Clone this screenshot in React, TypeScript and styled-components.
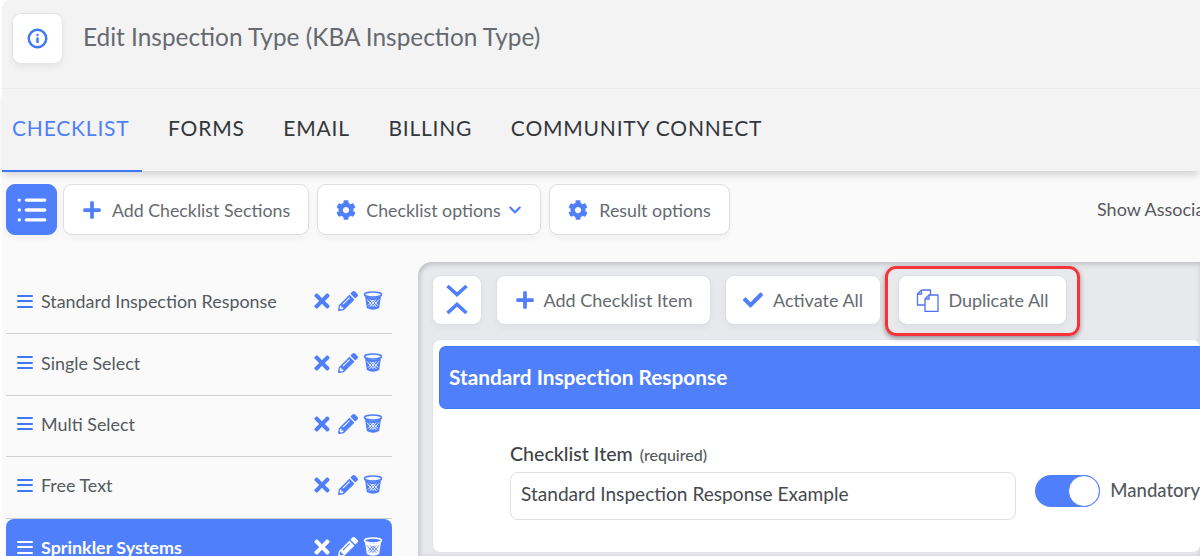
import React from "react";
import styled, { createGlobalStyle } from "styled-components";
import { Info, List } from "lucide-react";
import { FaCheck, FaChevronDown, FaCog, FaPencilAlt, FaPlus, FaTimes } from "react-icons/fa";

const BLUE = "#4f7ffb";
const Global = createGlobalStyle`
  html, body { margin: 0; padding: 0; width: 1200px; height: 556px; overflow: hidden; background: #fff; }
  * { box-sizing: border-box; }
  body { font-family: Lato, "Liberation Sans", sans-serif; color: #555; }
`;
const Frame = styled.div`
  width: 1200px; height: 556px; overflow: hidden; padding-left: 2px; background: #fff;
  display: flex; flex-direction: column;
`;
const Header = styled.header`
  height: 88px; flex: none; background: #f3f3f4; display: flex; align-items: flex-start;
  padding: 13px 0 0 10px; gap: 20px; border-top-left-radius: 8px;
`;
const InfoBox = styled.div`
  width: 51px; height: 51px; border-radius: 9px; background: #fff; border: 1px solid #e4e4e6;
  box-shadow: 0 3px 6px rgba(0,0,0,.06); display: flex; align-items: center; justify-content: center; color: #3f78f5;
`;
const Title = styled.h1`
  margin: 0; font-size: 24.4px; line-height: 48px; font-weight: 400; color: #666a70; white-space: nowrap;
`;
const Tabs = styled.nav`
  height: 83px; flex: none; background: #f3f3f4; border-top: 1px solid #ebebec; display: flex; gap: 38.6px;
  box-shadow: 0 6px 8px -2px rgba(0,0,0,.16); position: relative; z-index: 1;
`;
const Tab = styled.a<{ $active?: boolean }>`
  height: 82px; line-height: 78px; font-size: 21px; letter-spacing: .8px; white-space: nowrap;
  color: ${p => (p.$active ? BLUE : "#33373c")};
  margin-left: ${p => (p.$active ? "10px" : "0")};
  position: relative;
  ${p => p.$active && `&::after { content: ""; position: absolute; left: -10px; right: -13px; bottom: -1px; height: 2px; background: #3f78f5; }`}
`;
const Body = styled.div`
  flex: 1; background: #fafafa; min-height: 0; display: flex; flex-direction: column;
`;
const TopBar = styled.div`
  display: flex; gap: 8px; padding: 13px 0 0 4px; height: 91px; flex: none;
`;
const Btn = styled.button<{ $w: number; $gap?: number; $h?: number; $ml?: number; $fs?: number }>`
  width: ${p => p.$w}px; height: ${p => p.$h ?? 51}px; margin-left: ${p => p.$ml ?? 0}px;
  flex: none; background: #fff; border: 1px solid #dedfe1; border-radius: 9px;
  box-shadow: 0 3px 6px rgba(0,0,0,.04);
  font: 400 ${p => p.$fs ?? 17.8}px Lato, sans-serif; color: #666a70; display: flex; align-items: center; justify-content: center;
  gap: ${p => p.$gap ?? 9}px; padding: 0; white-space: nowrap;
  svg { color: ${BLUE}; flex: none; }
`;
const MenuBtn = styled(Btn)`
  background: ${BLUE}; border-color: ${BLUE}; svg { color: #fff; }
`;
const Caret = styled(FaChevronDown)`
  margin-left: -3px;
`;
const Show = styled.span`
  margin-left: auto; font-size: 18px; line-height: 51px; color: #55585d; white-space: nowrap; width: 103px;
`;
const Main = styled.div`
  flex: 1; min-height: 0; display: flex; padding-left: 4px;
`;
const Sidebar = styled.aside`
  width: 386px; flex: none; padding-top: 11px; margin-right: 26px;
`;
const Row = styled.div<{ $sel?: boolean }>`
  height: 61.4px; display: flex; align-items: center; padding: 0 9px 4px 11px; gap: 8px;
  border-bottom: ${p => (p.$sel ? "0" : "1px solid #cfcfcf")};
  background: ${p => (p.$sel ? BLUE : "transparent")};
  border-radius: ${p => (p.$sel ? "8px 8px 0 0" : "0")};
  color: ${p => (p.$sel ? "#fff" : "#555a60")};
  font-weight: ${p => (p.$sel ? 700 : 400)};
  svg { color: ${p => (p.$sel ? "#fff" : BLUE)}; flex: none; }
`;
const RowName = styled.span`
  flex: 1; white-space: nowrap; font-size: 17.9px;
`;
const RowIcons = styled.span`
  display: flex; align-items: center; gap: 5px;
`;
const Handle = styled.span<{ $sel?: boolean }>`
  width: 16px; height: 13px; flex: none; display: flex; flex-direction: column; justify-content: space-between;
  color: ${p => (p.$sel ? "#fff" : "#3f78f5")};
  i { display: block; height: 2px; background: currentColor; border-radius: 1px; }
`;
const Panel = styled.section`
  width: 782px; flex: none; background: #e8e9ec; border-radius: 14px 0 0 0; padding: 13px 0 0 14px;
  box-shadow: inset 0 3px 5px rgba(0,0,0,.12), inset 3px 0 5px rgba(0,0,0,.08);
  display: flex; flex-direction: column; height: 294px;
`;
const PanelBar = styled.div`
  display: flex; gap: 14px; height: 50px; flex: none; position: relative;
`;
const Mark = styled.span`
  position: absolute; left: 453px; top: -9px; width: 195px; height: 70px; border: 3px solid #f5333b; border-radius: 11px;
  box-shadow: 0 2px 5px rgba(0,0,0,.4);
`;
const Card = styled.div`
  margin-top: 14px; background: #fff; border: 1px solid #e2e3e5; border-right: 0; border-radius: 8px;
  padding: 6px 0 0 6px; height: 214px; overflow: hidden;
`;
const Banner = styled.div`
  height: 63px; background: ${BLUE}; border: 1px solid #3f78f5; border-right: 0; border-radius: 7px 0 0 7px;
  color: #fff; font-weight: 700; font-size: 20.8px; line-height: 59px; padding-left: 9px;
`;
const Form = styled.div`
  padding: 33px 0 0 71px;
`;
const Label = styled.div`
  font-size: 19.6px; line-height: 24px; font-weight: 500; color: #3f4347; margin-bottom: 5px;
  small { font-size: 16px; color: #55585d; margin-left: 2px; }
`;
const FieldRow = styled.div`
  display: flex; align-items: flex-start; gap: 19px;
`;
const Input = styled.div`
  width: 507.5px; height: 48px; border: 1px solid #dedfe1; border-radius: 8px; background: #fff;
  font-size: 19.1px; line-height: 42px; padding-left: 10px; color: #45494e; white-space: nowrap;
`;
const Toggle = styled.div`
  width: 65px; height: 32px; margin-top: 3px; background: ${BLUE}; border-radius: 16px; display: flex; justify-content: flex-end; flex: none;
  i { width: 32px; height: 32px; border-radius: 50%; background: #fff; border: 1px solid ${BLUE}; display: block; }
`;
const Mandatory = styled.span`
  font-size: 18.5px; font-weight: 500; line-height: 32px; margin: 2px 0 0 -9px; color: #55585d; white-space: nowrap;
`;
const ExpandIcon = styled.svg`
  margin-bottom: 2px;
`;

const Trash = ({ mesh }: { mesh: string }) => (
  <svg width={20} height={20} viewBox="0 0 20 20" fill="none">
    <ellipse cx="10" cy="3.5" rx="8.5" ry="2.5" fill="none" stroke="currentColor" strokeWidth="1.6" />
    <path d="M2 5 L3.8 17 Q10 20.5 16.2 17 L18 5 Q10 8.5 2 5Z" fill="currentColor" />
    <path d="M4 8.5l6 7M7 8.5l6.5 7.5M10 9l5 5.5M16 8.5l-6 7M13 8.5l-6.5 7.5M10 9l-5 5.5" stroke={mesh} strokeWidth=".9" />
  </svg>
);
const Copies = () => (
  <svg width="23" height="23" viewBox="0 0 23 23" fill="none" stroke="#4f70f5" strokeWidth="1.3" strokeLinejoin="round">
    <path d="M5.5 1H14.5V6" />
    <path d="M5.5 1L1.5 5V16H9" />
    <path d="M5.5 1V5H1.5" />
    <path d="M13 6H22V22.5H9V10Z" fill="#fff" />
    <path d="M13 6V10H9" />
  </svg>
);
const Expand = () => (
  <ExpandIcon width="22" height="31" viewBox="0 0 22 31" fill="none" stroke={BLUE} strokeWidth="3.6">
    <path d="M1.5 2L11 10.5L20.5 2" />
    <path d="M1.5 29L11 20.5L20.5 29" />
  </ExpandIcon>
);

const items = ["Standard Inspection Response", "Single Select", "Multi Select", "Free Text", "Sprinkler Systems"];

export default function App() {
  return (
    <Frame>
      <Global />
      <Header>
        <InfoBox><Info size={21} strokeWidth={2.8} /></InfoBox>
        <Title>Edit Inspection Type (KBA Inspection Type)</Title>
      </Header>
      <Tabs>
        <Tab $active>CHECKLIST</Tab>
        <Tab>FORMS</Tab>
        <Tab>EMAIL</Tab>
        <Tab>BILLING</Tab>
        <Tab>COMMUNITY CONNECT</Tab>
      </Tabs>
      <Body>
        <TopBar>
          <MenuBtn $w={51}><List size={34} strokeWidth={2.3} /></MenuBtn>
          <Btn $w={246} $ml={-2} $gap={10}><FaPlus size={20} />Add Checklist Sections</Btn>
          <Btn $w={224} $gap={10}><FaCog size={20} />Checklist options<Caret size={14} /></Btn>
          <Btn $w={181} $gap={11}><FaCog size={20} />Result options</Btn>
          <Show>Show Associa</Show>
        </TopBar>
        <Main>
          <Sidebar>
            {items.map((name, i) => (
              <Row key={name} $sel={i === 4}>
                <Handle $sel={i === 4}><i /><i /><i /></Handle>
                <RowName>{name}</RowName>
                <RowIcons>
                  <FaTimes size={22} />
                  <FaPencilAlt size={20} />
                  <Trash mesh={i === 4 ? BLUE : "#fff"} />
                </RowIcons>
              </Row>
            ))}
          </Sidebar>
          <Panel>
            <PanelBar>
              <Btn $w={50} $h={50}><Expand /></Btn>
              <Btn $w={215} $h={50} $fs={18}><FaPlus size={20} />Add Checklist Item</Btn>
              <Btn $w={156} $h={50} $fs={18} $gap={10}><FaCheck size={20} />Activate All</Btn>
              <Btn $w={169} $h={50} $ml={3} $fs={18}><Copies />Duplicate All</Btn>
              <Mark />
            </PanelBar>
            <Card>
              <Banner>Standard Inspection Response</Banner>
              <Form>
                <Label>Checklist Item <small>(required)</small></Label>
                <FieldRow>
                  <Input>Standard Inspection Response Example</Input>
                  <Toggle><i /></Toggle>
                  <Mandatory>Mandatory</Mandatory>
                </FieldRow>
              </Form>
            </Card>
          </Panel>
        </Main>
      </Body>
    </Frame>
  );
}
